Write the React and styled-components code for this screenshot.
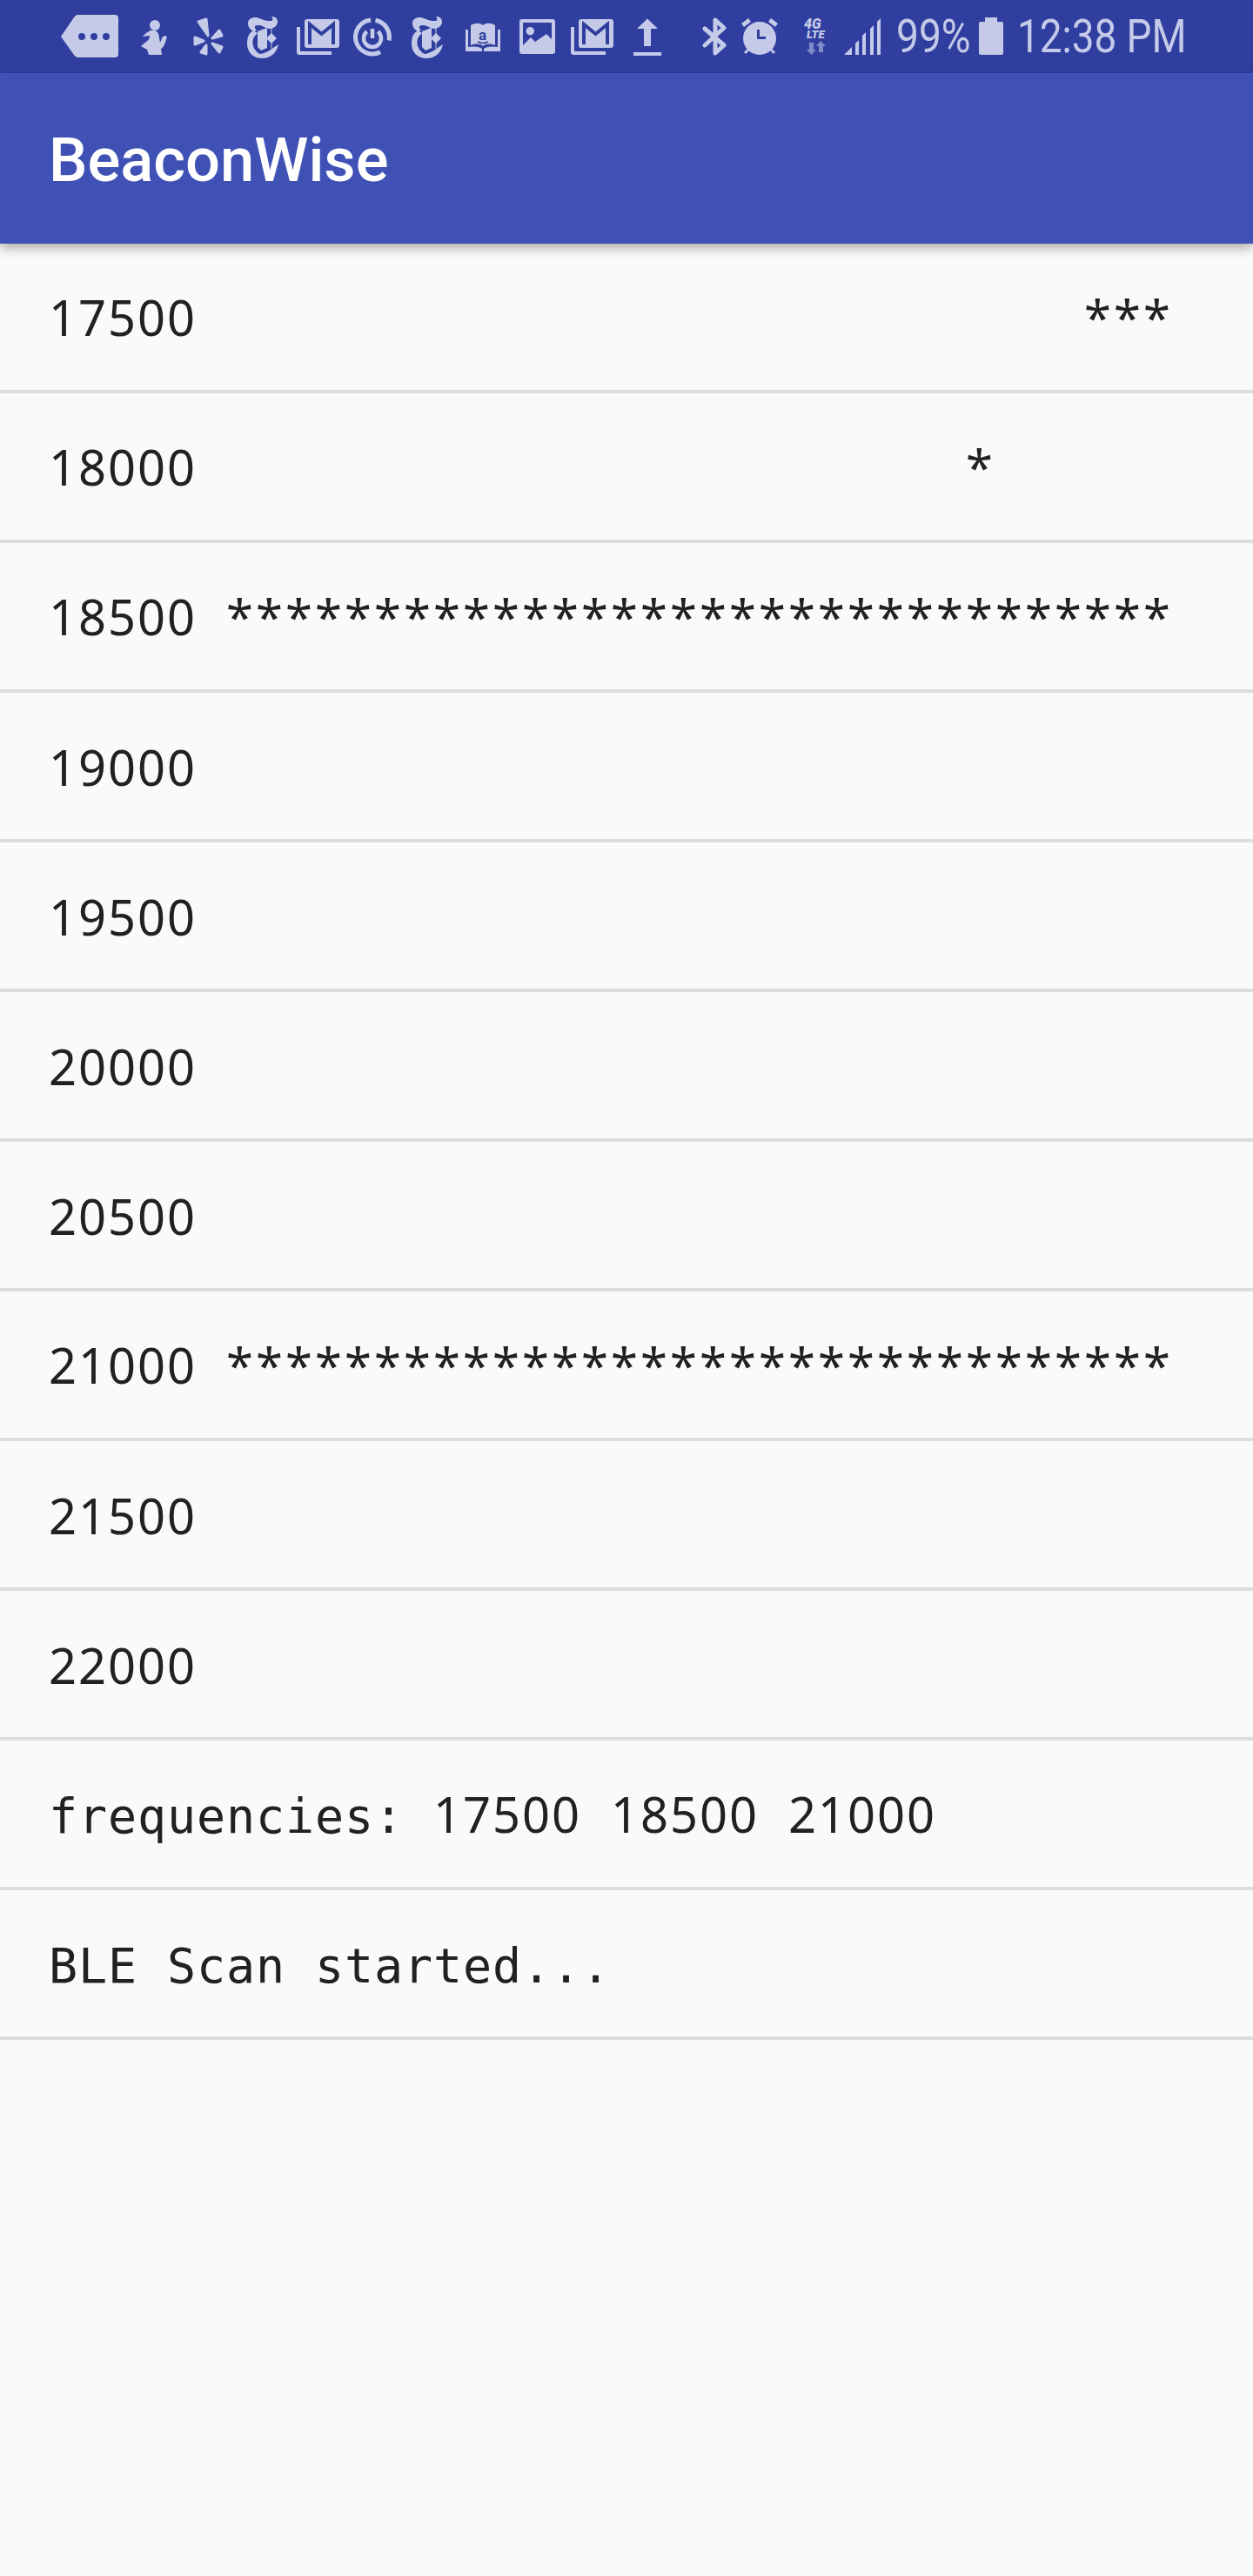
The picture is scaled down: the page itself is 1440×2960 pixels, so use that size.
import React from "react";
import styled, { createGlobalStyle } from "styled-components";

const GlobalStyle = createGlobalStyle`
    html, body {
        margin: 0;
        padding: 0;
        background: #fafafa;
    }
`;

const ICON = "#c5cae9";
const BAR = "#303f9f";

const Screen = styled.div`
    width: 1440px;
    height: 2960px;
    background: #fafafa;
    overflow: hidden;
`;

const StatusBar = styled.div`
    display: flex;
    align-items: flex-start;
    height: 84px;
    padding-left: 70px;
    background: ${BAR};
    color: ${ICON};
`;

const Icon = styled.svg`
    display: block;
    flex: none;
    height: 84px;
    margin-left: ${props => props.$gap || 0}px;
`;

const StatusText = styled.div`
    flex: none;
    width: ${props => props.$width}px;
    margin-left: ${props => props.$gap}px;
    font-family: Roboto, sans-serif;
    font-size: 53px;
    font-weight: 400;
    line-height: 84px;
    white-space: nowrap;
    transform: scaleX(${props => props.$squeeze});
    transform-origin: left center;
`;

const AppBar = styled.div`
    position: relative;
    display: flex;
    align-items: center;
    box-sizing: border-box;
    height: 196px;
    padding: 4px 0 0 56px;
    background: #3f51b5;
    box-shadow: 0 5px 12px rgba(0, 0, 0, 0.32);
`;

const AppTitle = styled.div`
    font-family: Roboto, sans-serif;
    font-size: 70.5px;
    font-weight: 500;
    color: #ffffff;
`;

const Row = styled.div`
    display: flex;
    align-items: center;
    box-sizing: border-box;
    height: 172px;
    padding: 2px 0 0 56px;
    border-bottom: 4px solid #dddddd;
`;

const RowText = styled.div`
    font-family: "Noto Sans", sans-serif;
    font-size: 56px;
    line-height: 76px;
    color: #212121;
    white-space: pre;
`;

// the screenshot's mono face is not installed, so each run is spaced out to its 34px pitch
const Digits = styled.span`
    letter-spacing: 1.97px;
`;

const Stars = styled.span`
    letter-spacing: 3.14px;
`;

const Letters = styled.span`
    font-family: "DejaVu Sans Mono", monospace;
    font-size: 55px;
    letter-spacing: 0.89px;
`;

const lines = [
    "17500                              ***",
    "18000                          *",
    "18500 ********************************",
    "19000",
    "19500",
    "20000",
    "20500",
    "21000 ********************************",
    "21500",
    "22000",
    "frequencies: 17500 18500 21000",
    "BLE Scan started...",
];

function MonoLine({ text }) {
    const runs = text.match(/\d+|\*+|[^\d*]+/g);
    return (
        <RowText>
            {runs.map((run, i) => {
                if (/\d/.test(run)) return <Digits key={i}>{run}</Digits>;
                if (run[0] === "*") return <Stars key={i}>{run}</Stars>;
                return <Letters key={i}>{run}</Letters>;
            })}
        </RowText>
    );
}

function GmailStack({ gap }) {
    return (
        <Icon $gap={gap} width="49" viewBox="0 0 49 84">
            <path fill={ICON} d="M0 31h4v28h36v4H3a3 3 0 0 1-3-3z" />
            <rect x="9" y="22" width="40" height="33" rx="3" fill={ICON} />
            <path fill="none" stroke={BAR} strokeWidth="4" d="M15 51V28l13.500 11L42 28v23" />
        </Icon>
    );
}

function NytT({ gap }) {
    return (
        <Icon $gap={gap} width="36" viewBox="0 0 36 84">
            <path fill={ICON} d="M1 27C1 22 5 20 9 20c4 0 7 2 10 3 3 1 6 1 8 1 3 0 3-2 1-5 4 0 7 2 7 6 0 4-4 8-9 8-5 0-8-4-12-4-3 0-6 0-5 3 0 1 1 2 2 3L8 36C4 35 1 31 1 27z" />
            <path fill={ICON} d="M7 35C2 38 0 43 0 50c0 11 8 17 17 17 10 0 17-6 19-16l-6 4c-2 2-5 3-8 5-3 1-5 2-7 2-3-1-6-4-8-9-1-5-1-9 3-13l2-2z" />
            <path fill={ICON} d="M12 36l11-4v23l-7 3-4-4z" />
            <path fill={ICON} d="M28 38l6 6-6 6-6-6z" />
            <path fill="none" stroke={ICON} strokeWidth="1" d="M28 31v25" />
        </Icon>
    );
}

export default function App() {
    return (
        <Screen>
            <GlobalStyle />
            <StatusBar>
                {/* message tag */}
                <Icon width="66" viewBox="0 0 66 84">
                    <path fill={ICON} fillRule="evenodd" d="M0 42L15 20a6 6 0 0 1 4-3h43a4 4 0 0 1 4 4v41a4 4 0 0 1-4 4H19a6 6 0 0 1-4-3zM24 38a4 4 0 1 0 0 8 4 4 0 0 0 0-8zM38 38a4 4 0 1 0 0 8 4 4 0 0 0 0-8zM52 38a4 4 0 1 0 0 8 4 4 0 0 0 0-8z" />
                </Icon>
                {/* runner */}
                <Icon $gap={25} width="31" viewBox="0 0 31 84">
                    <circle cx="17" cy="29" r="6" fill={ICON} />
                    <path fill={ICON} d="M12 35C8 37 5 39 3 42l8-1c0 3-1 5-4 7l-6 5 7 4 2 6h15l-1-7c3-2 5-6 6-11 1-1 1-3 0-4l-4 1-3 7-1-5c0-5-2-8-5-9z" />
                </Icon>
                {/* yelp */}
                <Icon $gap={30} width="35" viewBox="0 0 35 84">
                    <g fill={ICON} stroke={ICON} strokeWidth="3" strokeLinejoin="round">
                        <path d="M6 25l9-3 2 19z" />
                        <path d="M22 44l8-9 3 6z" />
                        <path d="M2 43l10 4-10 4z" />
                        <path d="M22 50l11 4-3 6z" />
                        <path d="M15 52l0 10-6-2z" />
                    </g>
                </Icon>
                <NytT gap={27} />
                <GmailStack gap={21} />
                {/* power ring */}
                <Icon $gap={16} width="44" viewBox="0 0 44 84">
                    <path fill="none" stroke={ICON} strokeWidth="5" d="M20 23.100A19.500 19.500 0 1 0 31 59.800M41 46.500A19.500 19.500 0 0 0 25.500 23.300" />
                    <path fill="none" stroke={ICON} strokeWidth="4.500" d="M15.600 36.300a10 10 0 1 0 12.800 0M22 33v11" />
                </Icon>
                <NytT gap={23} />
                {/* amazon book */}
                <Icon $gap={25} width="42" viewBox="0 0 42 84">
                    <path fill={ICON} d="M7 29c5-3 11-3 14 0 3-3 9-3 14 0v23c-5-2-11-2-14 1-3-3-9-3-14-1z" />
                    <path fill={ICON} d="M1 34h3v20c6-1 12-1 16 2v3H1zM41 34h-3v20c-6-1-12-1-16 2v3h19z" />
                    <text x="20.500" y="46" textAnchor="middle" fontFamily="Roboto, sans-serif" fontWeight="700" fontSize="17" fill={BAR}>a</text>
                    <path fill="none" stroke={BAR} strokeWidth="1.500" d="M15 48c4 2 8 2 12 0" />
                </Icon>
                {/* picture */}
                <Icon $gap={21} width="41" viewBox="0 0 41 84">
                    <path fill={ICON} fillRule="evenodd" d="M3 22h35a3 3 0 0 1 3 3v34a3 3 0 0 1-3 3H3a3 3 0 0 1-3-3V25a3 3 0 0 1 3-3zM4 26v26l9-9 5 5 13-9 6 6V26z" />
                    <circle cx="12.300" cy="35.700" r="4.700" fill={ICON} />
                </Icon>
                <GmailStack gap={18} />
                {/* upload */}
                <Icon $gap={23} width="32" viewBox="0 0 32 84">
                    <path fill={ICON} d="M16 21.500L28 33h-8v20h-8V33H4zM0 60h32v4H0z" />
                </Icon>
                {/* bluetooth */}
                <Icon $gap={47} width="28" viewBox="0 0 28 84">
                    <path fill="none" stroke={ICON} strokeWidth="5" strokeLinejoin="round" strokeLinecap="round" d="M3 33l22 19-10 9V23l10 9L3 52" />
                </Icon>
                {/* alarm */}
                <Icon $gap={17} width="42" viewBox="0 0 42 84">
                    <path fill={ICON} fillRule="evenodd" d="M21 25a19 19 0 1 1 0 38 19 19 0 0 1 0-38zM18 34v11h10v-3h-7v-8z" />
                    <path fill={ICON} d="M0 27l8-6 3 4-8 6zM42 27l-8-6-3 4 8 6zM3 60l4-4 2 2-4 4zM39 60l-4-4-2 2 4 4z" />
                </Icon>
                {/* 4G LTE */}
                <Icon $gap={30} width="26" viewBox="0 0 26 84">
                    <path fill={ICON} opacity="0.55" d="M6 49h5v8h3l-5.500 6L3 57h3zM19 47l6 6h-3v7h-5v-7h-3z" />
                    <text x="0" y="33" fontFamily="Roboto, sans-serif" fontWeight="900" fontStyle="italic" fontSize="16" fill={ICON}>4G</text>
                    <text x="3" y="44" fontFamily="Roboto, sans-serif" fontWeight="900" fontStyle="italic" fontSize="13" fill={ICON}>LTE</text>
                </Icon>
                {/* signal */}
                <Icon $gap={20} width="42" viewBox="0 0 42 84">
                    <path fill={ICON} d="M0 63l9-9v9zM13 50l4-4v17h-4zM21 41l4-4v26h-4zM30 33l4-4v34h-4zM38 25l4-4v42h-4z" />
                </Icon>
                <StatusText $gap={18} $width={85} $squeeze={0.87}>99%</StatusText>
                {/* battery */}
                <Icon $gap={10} width="28" viewBox="0 0 28 84">
                    <path fill={ICON} d="M7 20h14v5h5a2 2 0 0 1 2 2v34a2 2 0 0 1-2 2H2a2 2 0 0 1-2-2V27a2 2 0 0 1 2-2h5z" />
                </Icon>
                <StatusText $gap={16} $width={200} $squeeze={0.865}>12:38 PM</StatusText>
            </StatusBar>
            <AppBar>
                <AppTitle>BeaconWise</AppTitle>
            </AppBar>
            {lines.map(line => (
                <Row key={line}>
                    <MonoLine text={line} />
                </Row>
            ))}
        </Screen>
    );
}
